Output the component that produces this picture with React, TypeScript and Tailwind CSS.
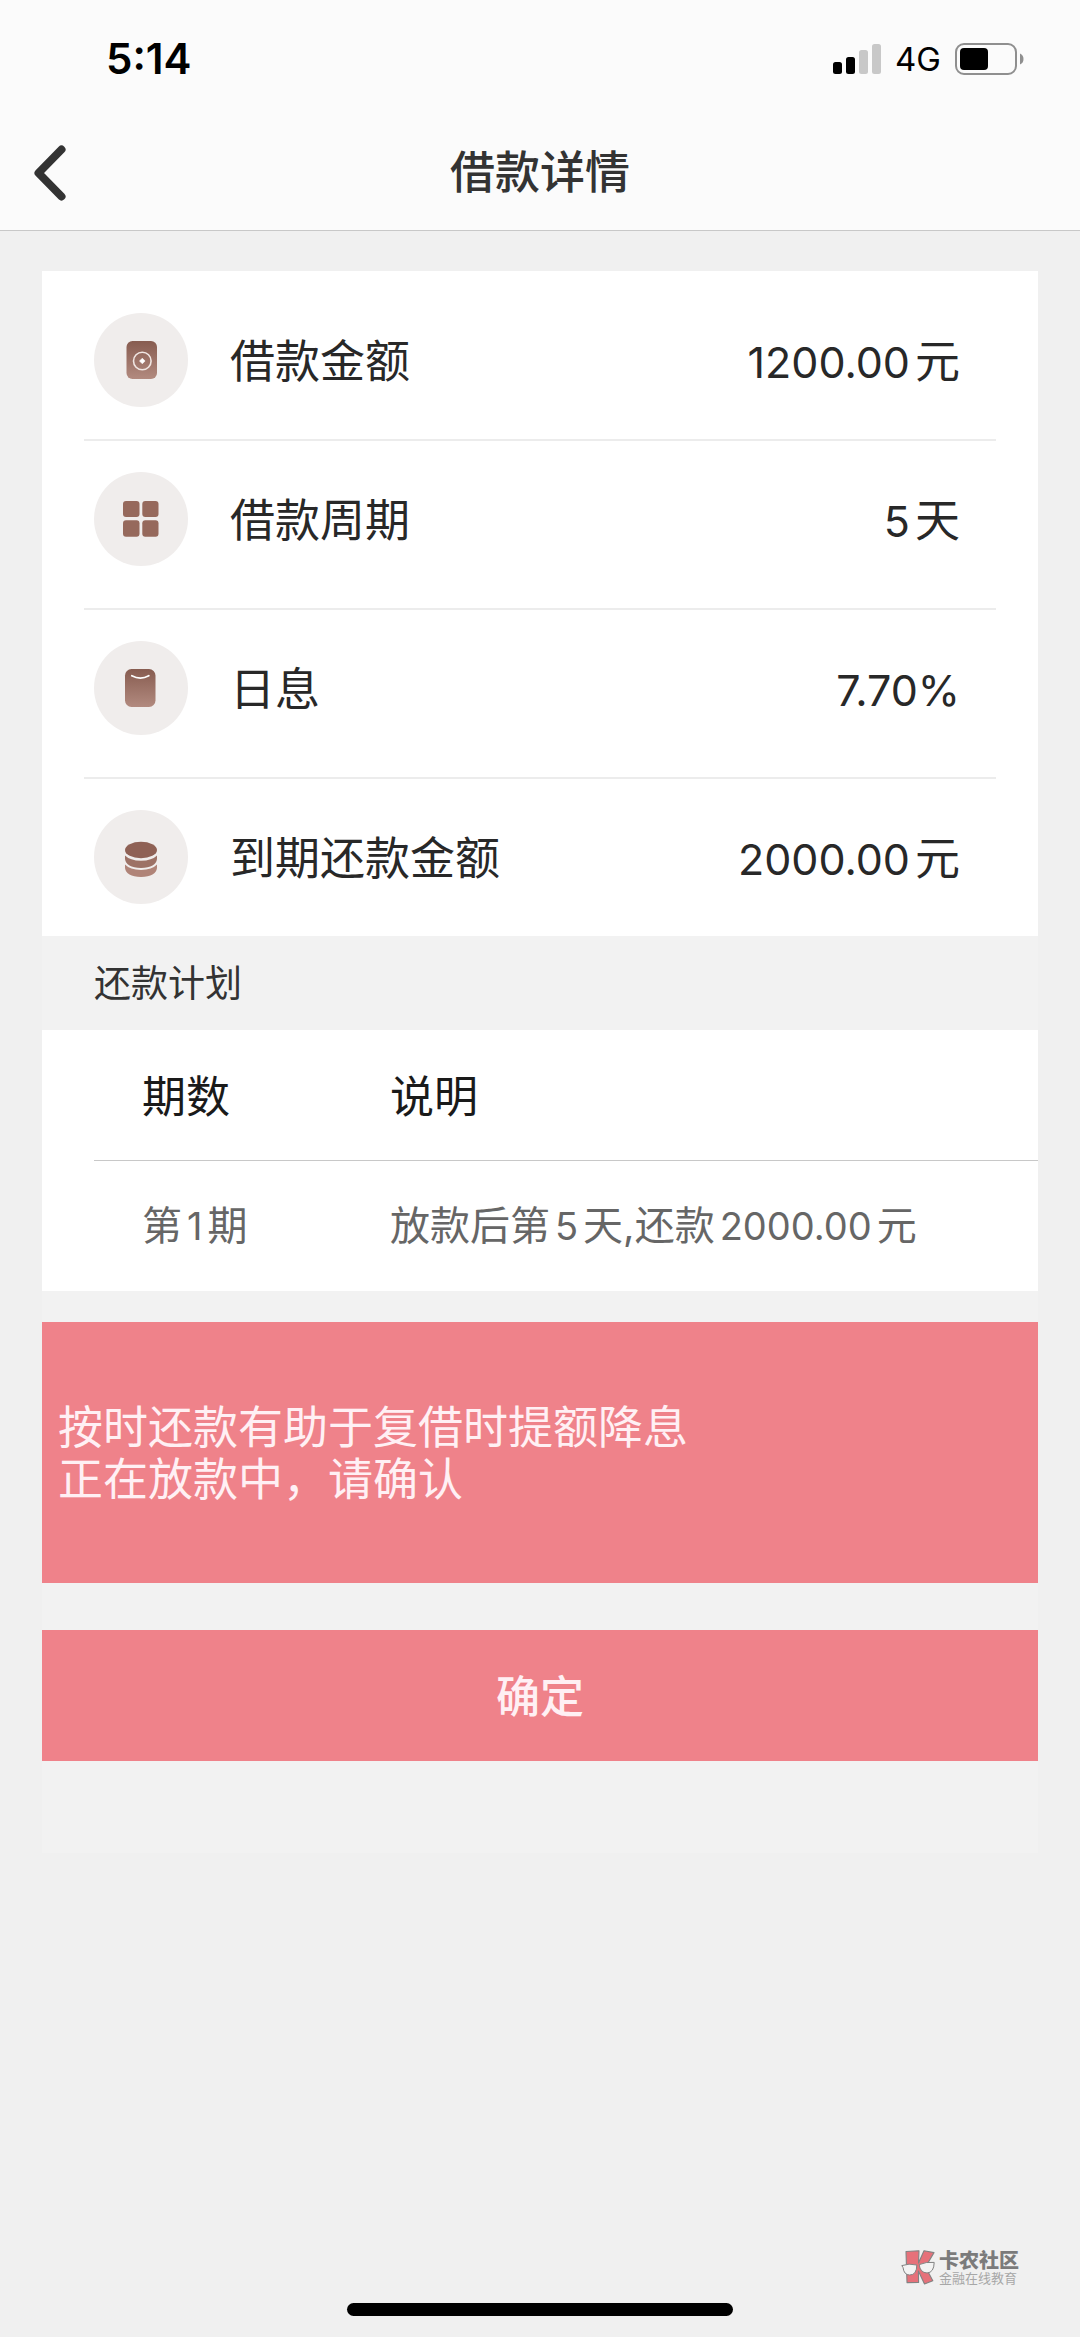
import type { ReactNode } from 'react';
import clsx from 'clsx';

type LoanItem = {
  label: string;
  value: string;
  icon: ReactNode;
};

const loanItems: LoanItem[] = [
  { label: '借款金额', value: '1200.00元', icon: <AmountIcon /> },
  { label: '借款周期', value: '5天', icon: <PeriodIcon /> },
  { label: '日息', value: '7.70%', icon: <RateIcon /> },
  { label: '到期还款金额', value: '2000.00元', icon: <RepayIcon /> },
];

const plan = [{ term: '第1期', note: '放款后第5天,还款2000.00元' }];

// Sets figures apart from the Chinese text around them
function MixedText({ text, numberClass }: { text: string; numberClass: string }) {
  const parts = text.split(/([\d.%]+)/).filter(Boolean);

  return (
    <>
      {parts.map((part, i) => (
        <span
          key={i}
          className={clsx(/\d/.test(part) && ['mx-[5px] first:ml-0 last:mr-0', numberClass])}
        >
          {part}
        </span>
      ))}
    </>
  );
}

function IconCircle({ id, children }: { id: string; children: ReactNode }) {
  return (
    <svg viewBox="0 0 94 94" className="size-[94px] shrink-0" aria-hidden="true">
      <defs>
        <linearGradient
          id={id}
          gradientUnits="userSpaceOnUse"
          x1="47"
          y1="28"
          x2="47"
          y2="66"
        >
          <stop offset="0" stopColor="#875c50" />
          <stop offset="1" stopColor="#b28a7f" />
        </linearGradient>
      </defs>
      <circle cx="47" cy="47" r="47" fill="#f0edec" />
      {children}
    </svg>
  );
}

function AmountIcon() {
  return (
    <IconCircle id="amount">
      <rect x="32.5" y="28" width="30.5" height="38" rx="6" fill="url(#amount)" />
      <circle cx="48.3" cy="48" r="8.8" fill="none" stroke="#f0e6e2" strokeWidth="1.6" />
      <path
        d="M48.3 45.2 L51.1 48 L48.3 50.8 L45.5 48Z"
        fill="#fff"
        stroke="#fff"
        strokeWidth="0.6"
      />
    </IconCircle>
  );
}

function PeriodIcon() {
  return (
    <IconCircle id="period">
      <g fill="#96695c">
        <rect x="29" y="29" width="16.5" height="16" rx="3" />
        <rect x="48.3" y="29" width="16.2" height="16" rx="3" />
        <rect x="29" y="48.3" width="16.5" height="16.5" rx="3" />
        <rect x="48.3" y="48.3" width="16.2" height="16.5" rx="3" />
      </g>
    </IconCircle>
  );
}

function RateIcon() {
  return (
    <IconCircle id="rate">
      <rect x="31" y="28" width="30.5" height="38" rx="6.5" fill="url(#rate)" />
      <path
        d="M37.8 34.8 Q46.5 39.4 54.8 34.8"
        fill="none"
        stroke="#fff"
        strokeWidth="1.8"
        strokeLinecap="round"
      />
    </IconCircle>
  );
}

function RepayIcon() {
  return (
    <IconCircle id="repay">
      <ellipse cx="47" cy="40" rx="16" ry="8.2" fill="#8f6155" />
      <path
        d="M31 45.5 Q36 50.6 47 50.8 Q58 50.6 63 45.5 V49 Q62 57.4 47 58 Q32 57.4 31 49Z"
        fill="#9d7266"
      />
      <path
        d="M31 54.5 Q36 59.8 47 60 Q58 59.8 63 54.5 V58 Q62 66.4 47 67 Q32 66.4 31 58Z"
        fill="#b08478"
      />
    </IconCircle>
  );
}

function StatusBar() {
  return (
    <div className="flex h-[118px] items-center justify-between pl-[106px] pr-14">
      <span className="text-[42px] font-semibold leading-[42px] text-black">5:14</span>
      <div className="flex items-center">
        <svg viewBox="0 0 48 30" className="h-[30px] w-12" aria-hidden="true">
          <rect x="0" y="18" width="9" height="12" rx="2.5" />
          <rect x="13" y="13" width="9" height="17" rx="2.5" />
          <rect x="26" y="6" width="9" height="24" rx="2.5" fill="#c8c8c8" />
          <rect x="39" y="0" width="9" height="30" rx="2.5" fill="#c8c8c8" />
        </svg>
        <span className="ml-[14px] text-[33px] leading-9 text-black">4G</span>
        <svg viewBox="0 0 69 32" className="ml-[14px] h-8 w-[69px]" aria-hidden="true">
          <rect
            x="1"
            y="1"
            width="60"
            height="30"
            rx="8"
            fill="none"
            stroke="#8f8f8f"
            strokeWidth="2"
          />
          <rect x="5" y="5" width="28" height="22" rx="4" />
          <path d="M65 10.5 Q68.5 12 68.5 16 Q68.5 20 65 21.5Z" fill="#8f8f8f" />
        </svg>
      </div>
    </div>
  );
}

function NavBar() {
  return (
    <div className="grid h-28 grid-cols-[1fr_auto_1fr] items-center px-8 pb-[2px]">
      <button type="button" aria-label="返回" className="justify-self-start">
        <svg viewBox="0 0 34 56" className="h-14 w-[34px]" aria-hidden="true">
          <path
            d="M29.5 4.5 L6.5 28 L29.5 51.5"
            fill="none"
            stroke="#333"
            strokeWidth="8"
            strokeLinecap="round"
            strokeLinejoin="round"
          />
        </svg>
      </button>
      <h1 className="text-[45px] font-medium leading-[52px] text-[#333]">借款详情</h1>
    </div>
  );
}

function LoanRow({ label, value, icon }: LoanItem) {
  return (
    <div className="flex items-center border-b-2 border-[#ececec] pb-[42px] pt-[31px] first:pb-8 first:pt-[42px] last:border-b-0 last:pb-8">
      <dt className="flex items-center gap-[42px] pl-[10px]">
        {icon}
        <span className="pt-1">{label}</span>
      </dt>
      <dd className="ml-auto pr-9 pt-1">
        <MixedText text={value} numberClass="text-[43px]" />
      </dd>
    </div>
  );
}

function Watermark() {
  return (
    <div className="flex items-center gap-1 self-end pr-[61px] opacity-90">
      <svg viewBox="0 0 34 35" className="h-[35px] w-[34px]" aria-hidden="true">
        <g fill="#e5646e" stroke="#777" strokeWidth="1.1" strokeLinejoin="round">
          <path d="M5 1.5 L18 0.8 L17.5 13 L23 0.8 L33 2.6 L24.5 17 L31.8 30.8 L23.5 34 L17.4 21 L17.6 32.4 L6 32.6Z" />
        </g>
        <g fill="#f4f4f4" stroke="#777" strokeWidth="1">
          <path d="M0.8 15.6 Q8 13 15.8 15 Q15.8 25 8.6 25 Q3 25 2 17.5Z" />
          <path d="M18.2 14.6 Q25 11.6 33.2 12.4 Q33 22.6 26 23 Q19 22.6 18.2 14.6Z" />
        </g>
      </svg>
      <div className="flex flex-col">
        <span className="text-[20px] font-black leading-5 text-[#6f6f6f]">卡农社区</span>
        <span className="text-[13px] leading-[14px] text-[#a0a0a0]">金融在线教育</span>
      </div>
    </div>
  );
}

export default function App() {
  return (
    <div
      lang="zh-CN"
      className="flex min-h-screen flex-col bg-[#f0f0f0] font-['Inter','Noto_Sans_CJK_SC',sans-serif]"
    >
      <header className="border-b border-[#c8c8c8] bg-[#fbfbfb]">
        <StatusBar />
        <NavBar />
      </header>

      <main className="mx-[42px] mt-10 bg-[#f2f2f2] pb-[92px]">
        <dl className="bg-white px-[42px] text-[45px] leading-[52px] text-[#282828]">
          {loanItems.map((item) => (
            <LoanRow key={item.label} {...item} />
          ))}
        </dl>

        <h2 className="px-[52px] pb-5 pt-[22px] text-[37px] leading-[52px] text-[#333]">
          还款计划
        </h2>

        <div className="bg-white pl-[52px]">
          <table className="w-full table-fixed text-left">
            <thead>
              <tr className="h-[130px] border-b border-[#c8c8c8] text-[44px] leading-[52px] text-[#1a1a1a]">
                <th className="w-[248px] pl-12 pt-1 font-normal">期数</th>
                <th className="pl-12 pt-1 font-normal">说明</th>
              </tr>
            </thead>
            <tbody>
              {plan.map((row) => (
                <tr key={row.term} className="h-[131px] text-[40px] leading-[52px] text-[#666]">
                  <td className="pl-12">
                    <MixedText text={row.term} numberClass="text-[38px]" />
                  </td>
                  <td className="pl-12">
                    <MixedText text={row.note} numberClass="text-[38px]" />
                  </td>
                </tr>
              ))}
            </tbody>
          </table>
        </div>

        <p className="mt-[31px] bg-[#ef828a] px-4 pb-[77px] pt-20 text-[45px] leading-[52px] text-[#fff0f4]">
          按时还款有助于复借时提额降息
          <br />
          正在放款中，请确认
        </p>

        <button
          type="button"
          className="mt-[47px] block h-[131px] w-full bg-[#ef828a] pt-[2px] text-[44px] font-medium leading-[52px] text-[#fff0f4]"
        >
          确定
        </button>
      </main>

      <footer className="mt-auto flex flex-col items-center gap-[18px] pb-[21px]">
        <Watermark />
        <div className="h-[13px] w-[386px] rounded-full bg-black" />
      </footer>
    </div>
  );
}
